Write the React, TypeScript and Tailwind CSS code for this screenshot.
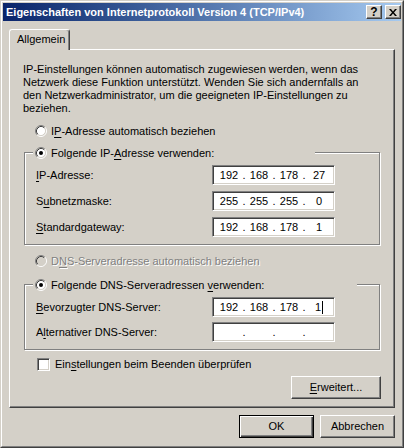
import React, { Fragment } from "react";

function U({ children }: { children: React.ReactNode }) {
  return <span className="underline decoration-1 underline-offset-[2px]">{children}</span>;
}

function Radio({ checked, disabled }: { checked?: boolean; disabled?: boolean }) {
  return (
    <svg width="12" height="12" viewBox="0 0 12 12" className="shrink-0 block">
      <circle cx="6" cy="6" r="4.5" fill={disabled ? "#D4D0C8" : "#ffffff"} />
      <path d="M2.11 9.89A5.5 5.5 0 0 1 9.89 2.11" stroke="#808080" fill="none" />
      <path d="M9.89 2.11A5.5 5.5 0 0 1 2.11 9.89" stroke="#ffffff" fill="none" />
      <path d="M2.82 9.18A4.5 4.5 0 0 1 9.18 2.82" stroke="#404040" fill="none" />
      <path d="M9.18 2.82A4.5 4.5 0 0 1 2.82 9.18" stroke="#D4D0C8" fill="none" />
      {checked && <circle cx="6" cy="6" r="2" fill={disabled ? "#808080" : "#000000"} />}
    </svg>
  );
}

function IpField({ parts, caret }: { parts: string[]; caret?: boolean }) {
  return (
    <div className="w-[123px] h-[20px] bg-white border border-t-[#808080] border-l-[#808080] border-r-white border-b-white shadow-[inset_1px_1px_0_#404040,inset_-1px_-1px_0_#D4D0C8] flex items-center pl-[4px]">
      {parts.map((p, i) => (
        <Fragment key={i}>
          <span className="w-[24px] text-center flex items-center justify-center">
            {p}
            {caret && i === 3 && <span className="inline-block w-px h-[13px] bg-black ml-[1px]" />}
          </span>
          {i < 3 && <span className="w-[6px] text-center">.</span>}
        </Fragment>
      ))}
    </div>
  );
}

function Btn({ children, w, def }: { children: React.ReactNode; w: string; def?: boolean }) {
  return (
    <div
      className={
        def
          ? `${w} h-[23px] flex items-center justify-center border border-black shadow-[inset_1px_1px_0_#fff,inset_-1px_-1px_0_#404040,inset_-2px_-2px_0_#808080]`
          : `${w} h-[23px] flex items-center justify-center border border-t-white border-l-white border-r-[#404040] border-b-[#404040] shadow-[inset_-1px_-1px_0_#808080]`
      }
    >
      {children}
    </div>
  );
}

function Row({ label, parts, caret }: { label: React.ReactNode; parts: string[]; caret?: boolean }) {
  return (
    <div className="flex items-center h-[20px]">
      <div className="w-[176px]">{label}</div>
      <IpField parts={parts} caret={caret} />
    </div>
  );
}

export default function App() {
  return (
    <div className="w-[404px] h-[448px] bg-[#D4D0C8] border border-t-[#D4D0C8] border-l-[#D4D0C8] border-r-[#404040] border-b-[#404040] font-['Liberation_Sans',Arial,sans-serif] text-[11px] text-black leading-[13px]">
      <div className="h-full border border-t-white border-l-white border-r-[#808080] border-b-[#808080] p-[1px] flex flex-col">
        {/* Title bar */}
        <div className="h-[18px] shrink-0 flex items-center bg-gradient-to-r from-[#0A246A] to-[#A6CAF0] pl-[3px]">
          <span className="font-bold text-white whitespace-nowrap">Eigenschaften von Internetprotokoll Version 4 (TCP/IPv4)</span>
          <div className="ml-auto flex gap-[3px]">
            <div className="w-[16px] h-[14px] bg-[#D4D0C8] border border-t-white border-l-white border-r-[#404040] border-b-[#404040] shadow-[inset_-1px_-1px_0_#808080] flex items-center justify-center font-bold text-[12px] leading-none pb-[1px]">
              ?
            </div>
            <div className="w-[16px] h-[14px] bg-[#D4D0C8] border border-t-white border-l-white border-r-[#404040] border-b-[#404040] shadow-[inset_-1px_-1px_0_#808080] flex items-center justify-center">
              <svg width="8" height="7" viewBox="0 0 8 7" className="block">
                <path d="M0 0h2l2 2.5L6 0h2L5 3.5 8 7H6L4 4.5 2 7H0l3-3.5z" fill="#000" />
              </svg>
            </div>
          </div>
        </div>

        {/* Tab */}
        <div className="mt-[8px] ml-[6px] flex">
          <div className="relative z-10 -mb-px w-[61px] h-[21px] bg-[#D4D0C8] border-t border-l border-white border-r border-r-[#404040] rounded-t-[3px] shadow-[inset_-1px_0_0_#808080] pl-[7px] flex items-center pb-[1px]">
            Allgemein
          </div>
        </div>

        {/* Panel */}
        <div className="mx-[6px] h-[359px] shrink-0 border border-t-white border-l-white border-r-[#404040] border-b-[#404040] shadow-[inset_-1px_-1px_0_#808080] flex flex-col">
          <div className="pt-[13px] pl-[13px] whitespace-nowrap">
            <div>IP-Einstellungen können automatisch zugewiesen werden, wenn das</div>
            <div>Netzwerk diese Funktion unterstützt. Wenden Sie sich andernfalls an</div>
            <div>den Netzwerkadministrator, um die geeigneten IP-Einstellungen zu</div>
            <div>beziehen.</div>
          </div>

          <div className="mt-[9px] ml-[25px] h-[14px] flex items-center gap-[4px]">
            <Radio />
            <span>
              I<U>P</U>-Adresse automatisch beziehen
            </span>
          </div>

          <div className="relative mt-[14px] mx-[14px] h-[93px] shrink-0 border border-[#808080] shadow-[inset_1px_1px_0_#fff,1px_1px_0_#fff] pt-[12px] pl-[11px] flex flex-col gap-[6px]">
            <div className="absolute left-[8px] top-[-6px] w-[282px] h-[12px] pl-[2px] bg-[#D4D0C8] flex items-center gap-[4px]">
              <Radio checked />
              <span className="whitespace-nowrap">
                Folgende IP-<U>A</U>dresse verwenden:
              </span>
            </div>
            <Row label={<><U>I</U>P-Adresse:</>} parts={["192", "168", "178", "27"]} />
            <Row label={<>S<U>u</U>bnetzmaske:</>} parts={["255", "255", "255", "0"]} />
            <Row label={<><U>S</U>tandardgateway:</>} parts={["192", "168", "178", "1"]} />
          </div>

          <div className="mt-[9px] ml-[25px] h-[14px] flex items-center gap-[4px]">
            <Radio disabled />
            <span className="text-[#808080] [text-shadow:1px_1px_0_#fff]">
              D<U>N</U>S-Serveradresse automatisch beziehen
            </span>
          </div>

          <div className="relative mt-[16px] mx-[14px] h-[66px] shrink-0 border border-[#808080] shadow-[inset_1px_1px_0_#fff,1px_1px_0_#fff] pt-[12px] pl-[11px] flex flex-col gap-[5px]">
            <div className="absolute left-[8px] top-[-6px] w-[324px] h-[12px] pl-[2px] bg-[#D4D0C8] flex items-center gap-[4px]">
              <Radio checked />
              <span className="whitespace-nowrap">
                Folgende DNS-Serveradressen <U>v</U>erwenden:
              </span>
            </div>
            <Row label={<><U>B</U>evorzugter DNS-Server:</>} parts={["192", "168", "178", "1"]} caret />
            <Row label={<>A<U>l</U>ternativer DNS-Server:</>} parts={["", "", "", ""]} />
          </div>

          <div className="mt-[8px] ml-[27px] h-[13px] flex items-center gap-[5px]">
            <div className="w-[13px] h-[13px] bg-white border border-t-[#808080] border-l-[#808080] border-r-white border-b-white shadow-[inset_1px_1px_0_#404040,inset_-1px_-1px_0_#D4D0C8]" />
            <span>
              Ein<U>s</U>tellungen beim Beenden überprüfen
            </span>
          </div>

          <div className="mt-[5px] mr-[13px] self-end">
            <Btn w="w-[90px]">
              <span>
                <U>E</U>rweitert...
              </span>
            </Btn>
          </div>
        </div>

        {/* Bottom buttons */}
        <div className="mt-[7px] mr-[6px] flex justify-end gap-[6px]">
          <Btn w="w-[75px]" def>
            OK
          </Btn>
          <Btn w="w-[75px]">Abbrechen</Btn>
        </div>
      </div>
    </div>
  );
}
